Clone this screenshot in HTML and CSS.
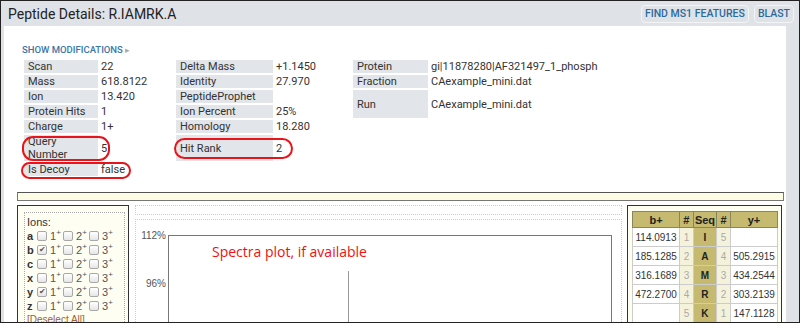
FILE: index.html
```html
<!DOCTYPE html>
<html lang="en">
<head>
    <meta charset="UTF-8">
    <meta name="viewport" content="width=device-width, initial-scale=1.0">
    <title>Peptide Details</title>
    <link rel="stylesheet" href="styles.css">
</head>
<body>
<div class="frame">
    <div class="header">
        <h1 class="title">Peptide Details: R.IAMRK.A</h1>
        <div class="actions">
            <a class="btn">FIND MS1 FEATURES</a>
            <a class="btn">BLAST</a>
        </div>
    </div>

    <div class="main">
        <a class="mods">SHOW MODIFICATIONS <span class="caret">&#9656;</span></a>

        <div class="details">
            <table class="props">
                <tr>
                    <th class="w1">Scan</th><td class="v1">22</td>
                    <th class="w2">Delta Mass</th><td class="v2">+1.1450</td>
                    <th class="w3">Protein</th><td>gi|11878280|AF321497_1_phosph</td>
                </tr>
                <tr>
                    <th>Mass</th><td>618.8122</td>
                    <th>Identity</th><td>27.970</td>
                    <th>Fraction</th><td>CAexample_mini.dat</td>
                </tr>
                <tr>
                    <th>Ion</th><td>13.420</td>
                    <th>PeptideProphet</th><td></td>
                    <th rowspan="2">Run</th><td rowspan="2">CAexample_mini.dat</td>
                </tr>
                <tr>
                    <th>Protein Hits</th><td>1</td>
                    <th>Ion Percent</th><td>25%</td>
                </tr>
                <tr>
                    <th>Charge</th><td>1+</td>
                    <th>Homology</th><td>18.280</td>
                    <td></td><td></td>
                </tr>
                <tr>
                    <th>Query Number</th><td>5</td>
                    <th>Hit Rank</th><td>2</td>
                    <td></td><td></td>
                </tr>
                <tr>
                    <th>Is Decoy</th><td>false</td>
                    <td></td><td></td><td></td><td></td>
                </tr>
            </table>
            <!-- annotation rings -->
            <span class="ring ring-query"></span>
            <span class="ring ring-decoy"></span>
            <span class="ring ring-rank"></span>
        </div>

        <div class="bar"></div>

        <div class="lower">
            <div class="ions">
                <div class="ions-inner">
                    <div class="ions-title">Ions:</div>
                    <div class="ion-row"><b>a</b><span class="cb"></span><span class="chg">1<sup>+</sup></span><span class="cb"></span><span class="chg">2<sup>+</sup></span><span class="cb"></span><span class="chg">3<sup>+</sup></span></div>
                    <div class="ion-row"><b>b</b><span class="cb on">&#10004;</span><span class="chg">1<sup>+</sup></span><span class="cb"></span><span class="chg">2<sup>+</sup></span><span class="cb"></span><span class="chg">3<sup>+</sup></span></div>
                    <div class="ion-row"><b>c</b><span class="cb"></span><span class="chg">1<sup>+</sup></span><span class="cb"></span><span class="chg">2<sup>+</sup></span><span class="cb"></span><span class="chg">3<sup>+</sup></span></div>
                    <div class="ion-row"><b>x</b><span class="cb"></span><span class="chg">1<sup>+</sup></span><span class="cb"></span><span class="chg">2<sup>+</sup></span><span class="cb"></span><span class="chg">3<sup>+</sup></span></div>
                    <div class="ion-row"><b>y</b><span class="cb on">&#10004;</span><span class="chg">1<sup>+</sup></span><span class="cb"></span><span class="chg">2<sup>+</sup></span><span class="cb"></span><span class="chg">3<sup>+</sup></span></div>
                    <div class="ion-row"><b>z</b><span class="cb"></span><span class="chg">1<sup>+</sup></span><span class="cb"></span><span class="chg">2<sup>+</sup></span><span class="cb"></span><span class="chg">3<sup>+</sup></span></div>
                    <a class="deselect">[Deselect All]</a>
                </div>
            </div>

            <div class="plot">
                <div class="plot-top"></div>
                <div class="plot-main">
                    <div class="chart">
                        <span class="tick t112">112%</span>
                        <span class="tick t96">96%</span>
                        <span class="peak"></span>
                        <span class="note">Spectra plot, if available</span>
                    </div>
                </div>
            </div>

            <div class="frags">
                <table class="frag-table">
                    <tr><th class="fw">b+</th><th class="fn">#</th><th class="fs">Seq</th><th class="fn">#</th><th class="fw">y+</th></tr>
                    <tr><td>114.0913</td><td class="num">1</td><td class="seq">I</td><td class="num">5</td><td></td></tr>
                    <tr><td>185.1285</td><td class="num">2</td><td class="seq">A</td><td class="num">4</td><td>505.2915</td></tr>
                    <tr><td>316.1689</td><td class="num">3</td><td class="seq">M</td><td class="num">3</td><td>434.2544</td></tr>
                    <tr><td>472.2700</td><td class="num">4</td><td class="seq">R</td><td class="num">2</td><td>303.2139</td></tr>
                    <tr><td></td><td class="num">5</td><td class="seq">K</td><td class="num">1</td><td>147.1128</td></tr>
                </table>
            </div>
        </div>
    </div>
</div>
</body>
</html>
```

FILE: styles.css
```css
*{
    box-sizing: border-box;
}
body{
    margin: 0;
    font-family: Roboto, "Liberation Sans", sans-serif;
    color: #333;
}
.frame{
    width: 800px;
    height: 323px;
    border: 1px solid #222;
    background: #dfe3e8;
    display: flex;
    flex-direction: column;
    overflow: hidden;
}
.header{
    height: 25px;
    flex: none;
    display: flex;
    align-items: center;
    justify-content: space-between;
    padding: 0 5px 0 7px;
}
.title{
    margin: 0;
    font-size: 14px;
    font-weight: 400;
    color: #222;
}
.actions{
    display: flex;
    gap: 5px;
}
.btn{
    font-size: 10.5px;
    font-weight: 500;
    line-height: 16px;
    color: #2c6a9c;
    border: 1px solid #f2f4f6;
    border-radius: 4px;
    padding: 0 3px;
}
.main{
    flex: 1;
    background: #fff;
    margin: 0 13px 0 3px;
    overflow: hidden;
}
.mods{
    display: block;
    margin: 18px 0 0 18px;
    font-size: 9.5px;
    line-height: 12px;
    font-weight: 500;
    color: #3a76a8;
}
.caret{
    color: #aaa;
    font-size: 9px;
}

/* property tables */
.details{
    position: relative;
    padding-left: 18px;
    margin-top: 2px;
}
.props{
    border-spacing: 2px;
    font-size: 11px;
    line-height: 13px;
    color: #333;
}
.props th{
    background: #e2e5e9;
    font-weight: 400;
    text-align: left;
    padding: 0 4px;
}
.props td{
    padding: 0 1px;
}
.props .w1{ width: 74px; }
.props .v1{ width: 74px; }
.props .w2{ width: 97px; }
.props .v2{ width: 76px; }
.props .w3{ width: 75px; }
.ring{
    position: absolute;
    border: 2px solid #e8141b;
    border-radius: 11px;
}
.ring-query{ left: 18px; top: 78px; width: 88px; height: 25px; }
.ring-decoy{ left: 17px; top: 104px; width: 110px; height: 17px; }
.ring-rank{ left: 170px; top: 80px; width: 119px; height: 21px; }

.bar{
    height: 9px;
    margin: 14px 2px 0 13px;
    background: #fdfde6;
    border: 1px solid #777;
    border-top-color: #555;
}

/* lower section */
.lower{
    display: flex;
    margin: 4px 0 0 13px;
    height: 200px;
}
.ions{
    width: 112px;
    border: 1px solid #333;
    background: #fefef2;
    padding: 6px 3px 0 6px;
    font-family: "Liberation Sans", Arial, sans-serif;
    font-size: 11px;
    color: #333;
}
.ions-inner{
    border: 1px dotted #aaa;
    padding: 2px 0 0 2px;
    height: 200px;
}
.ions-title{
    line-height: 14px;
}
.ion-row{
    display: flex;
    align-items: center;
    height: 14px;
    line-height: 14px;
}
.ion-row b{
    width: 10px;
}
.cb{
    width: 10px;
    height: 10px;
    border: 1px solid #a8a8a8;
    border-radius: 2px;
    background: linear-gradient(#fff, #e6e6e6);
    font-size: 8px;
    line-height: 8px;
    text-align: center;
    color: #555;
}
.chg{
    width: 13px;
    margin-left: 3px;
    color: #555;
}
.chg sup{
    font-size: 8px;
    line-height: 0;
}
.deselect{
    display: block;
    font-size: 10px;
    line-height: 13px;
    color: #a0603a;
}

.plot{
    width: 487px;
    margin-left: 6px;
    display: flex;
    flex-direction: column;
    gap: 4px;
}
.plot-top{
    height: 10px;
    flex: none;
    border: 1px dotted #ccc;
}
.plot-main{
    flex: 1;
    border: 1px dotted #ccc;
    padding: 15px 9px 0 32px;
}
.chart{
    position: relative;
    height: 200px;
    border: 1px solid #777;
    border-bottom: none;
}
.tick{
    position: absolute;
    right: calc(100% + 3px);
    font-family: "Liberation Sans", Arial, sans-serif;
    font-size: 10px;
    line-height: 12px;
    color: #555;
}
.t112{ top: -6px; }
.t96{ top: 42px; }
.peak{
    position: absolute;
    left: 179px;
    top: 35px;
    width: 1px;
    height: 200px;
    background: #999;
}
.note{
    position: absolute;
    left: 43px;
    top: 7px;
    font-family: "Open Sans", sans-serif;
    font-size: 14px;
    line-height: 18px;
    color: #f01010;
}

.frags{
    width: 155px;
    margin-left: 5px;
    border: 1px solid #333;
    background: #fefef0;
    padding: 5px 3px 0 4px;
}
.frag-table{
    width: 146px;
    border-collapse: collapse;
    font-family: "Liberation Sans", Arial, sans-serif;
    font-size: 10px;
    color: #333;
}
.frag-table th{
    background: #c5ba70;
    border: 1px solid #8a8460;
    font-size: 11px;
    height: 16px;
    color: #222;
}
.frag-table td{
    border: 1px solid #ccc;
    background: #fff;
    height: 19px;
    text-align: center;
}
.frag-table .fw{ width: 47px; }
.frag-table .fn{ width: 14px; }
.frag-table .fs{ width: 22px; }
.frag-table td.num{
    background: #f5f2dc;
    color: #aaa;
}
.frag-table td.seq{
    background: #c5ba70;
    font-weight: 700;
    color: #222;
}
```
